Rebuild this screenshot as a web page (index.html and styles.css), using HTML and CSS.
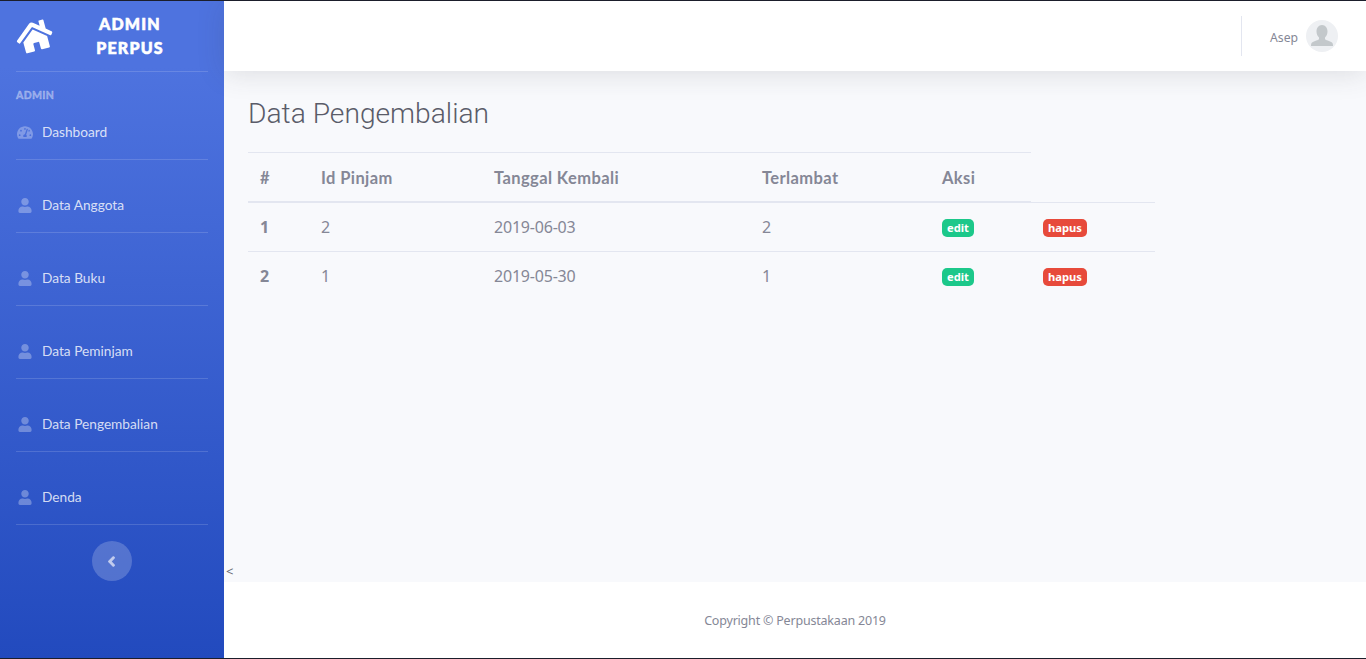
FILE: index.html
```html
<!DOCTYPE html>
<html lang="en">
<head>
    <meta charset="UTF-8">
    <meta name="viewport" content="width=device-width, initial-scale=1.0">
    <title>Data Pengembalian</title>
    <link rel="stylesheet" href="styles.css">
</head>
<body>
    <svg class="icon-defs" width="0" height="0">
        <symbol id="icon-user" viewBox="0 0 448 512">
            <path d="M224 256c70.7 0 128-57.3 128-128S294.7 0 224 0 96 57.3 96 128s57.3 128 128 128zm89.6 32h-16.7c-22.2 10.2-46.9 16-72.9 16s-50.6-5.8-72.9-16h-16.7C60.2 288 0 348.2 0 422.4V464c0 26.5 21.5 48 48 48h352c26.5 0 48-21.5 48-48v-41.6c0-74.2-60.2-134.4-134.4-134.4z"/>
        </symbol>
    </svg>

    <aside class="sidebar">
        <div class="brand">
            <svg class="brand-icon" viewBox="0 0 576 512">
                <path d="M280.37 148.26L96 300.11V464a16 16 0 0 0 16 16l112.06-.29a16 16 0 0 0 15.92-16V368a16 16 0 0 1 16-16h64a16 16 0 0 1 16 16v95.64a16 16 0 0 0 16 16.05L464 480a16 16 0 0 0 16-16V300L295.67 148.26a12.19 12.19 0 0 0-15.3 0zM571.6 251.47L488 182.56V44.05a12 12 0 0 0-12-12h-56a12 12 0 0 0-12 12v72.61L318.47 43a48 48 0 0 0-61 0L4.34 251.47a12 12 0 0 0-1.6 16.9l25.5 31A12 12 0 0 0 45.15 301l235.22-193.74a12.19 12.19 0 0 1 15.3 0L530.9 301a12 12 0 0 0 16.9-1.6l25.5-31a12 12 0 0 0-1.7-16.93z"/>
            </svg>
            <div class="brand-text">ADMIN PERPUS</div>
        </div>
        <div class="nav-heading">ADMIN</div>
        <a class="nav-item nav-first" href="#">
            <svg class="nav-icon nav-icon-wide" viewBox="0 0 576 512">
                <path d="M288 32C128.94 32 0 160.94 0 320c0 52.8 14.25 102.26 39.06 144.8 5.61 9.62 16.3 15.2 27.44 15.2h443c11.14 0 21.83-5.58 27.44-15.2C561.75 422.26 576 372.8 576 320c0-159.06-128.94-288-288-288zm0 64c14.71 0 26.58 10.13 30.32 23.65-1.11 2.26-2.64 4.23-3.45 6.67l-9.22 27.67c-5.13 3.49-10.97 6.01-17.64 6.01-17.67 0-32-14.33-32-32S270.33 96 288 96zM96 384c-17.67 0-32-14.33-32-32s14.33-32 32-32 32 14.33 32 32-14.33 32-32 32zm48-160c-17.67 0-32-14.33-32-32s14.33-32 32-32 32 14.33 32 32-14.33 32-32 32zm246.77-72.41l-61.33 184C343.13 347.33 352 364.54 352 384c0 11.72-3.38 22.55-8.88 32H232.88c-5.5-9.45-8.88-20.28-8.88-32 0-33.94 26.5-61.43 59.9-63.59l61.34-184.01c4.17-12.56 17.73-19.45 30.36-15.17 12.57 4.19 19.35 17.77 15.17 30.36zm14.66 57.2l15.52-46.55c3.47-1.29 7.13-2.23 11.05-2.23 17.67 0 32 14.33 32 32s-14.33 32-32 32c-11.38-.01-20.89-6.28-26.57-15.22zM480 384c-17.67 0-32-14.33-32-32s14.33-32 32-32 32 14.33 32 32-14.33 32-32 32z"/>
            </svg>
            <span>Dashboard</span>
        </a>
        <a class="nav-item" href="#"><svg class="nav-icon"><use href="#icon-user"/></svg><span>Data Anggota</span></a>
        <a class="nav-item" href="#"><svg class="nav-icon"><use href="#icon-user"/></svg><span>Data Buku</span></a>
        <a class="nav-item" href="#"><svg class="nav-icon"><use href="#icon-user"/></svg><span>Data Peminjam</span></a>
        <a class="nav-item" href="#"><svg class="nav-icon"><use href="#icon-user"/></svg><span>Data Pengembalian</span></a>
        <a class="nav-item" href="#"><svg class="nav-icon"><use href="#icon-user"/></svg><span>Denda</span></a>
        <button class="sidebar-toggle" type="button">
            <svg viewBox="0 0 320 512"><path d="M34.52 239.03L228.87 44.69c9.37-9.37 24.57-9.37 33.94 0l22.67 22.67c9.36 9.36 9.37 24.52.04 33.9L131.49 256l154.02 154.75c9.34 9.38 9.32 24.54-.04 33.9l-22.67 22.67c-9.37 9.37-24.57 9.37-33.94 0L34.52 272.97c-9.37-9.37-9.37-24.57 0-33.94z"/></svg>
        </button>
    </aside>

    <div class="main">
        <header class="topbar">
            <div class="topbar-divider"></div>
            <span class="user-name">Asep</span>
            <div class="avatar">
                <svg viewBox="0 0 24 24"><path d="M12 1c-3.500 0-5.500 3-5.500 6.500 0 2.500 1 4.500 2.500 6v1.500c0 1-5 2-7 3.500-1 .8-1 2.500-1 3.500h22c0-1 0-2.700-1-3.500-2-1.500-7-2.500-7-3.500v-1.500c1.500-1.500 2.500-3.500 2.500-6C17.500 4 15.500 1 12 1z"/></svg>
            </div>
        </header>

        <main class="content">
            <h1 class="page-title">Data Pengembalian</h1>
            <table class="data-table">
                <colgroup>
                    <col class="col-no">
                    <col class="col-id">
                    <col class="col-date">
                    <col class="col-late">
                    <col class="col-edit">
                    <col class="col-del">
                </colgroup>
                <thead>
                    <tr>
                        <th>#</th>
                        <th>Id Pinjam</th>
                        <th>Tanggal Kembali</th>
                        <th>Terlambat</th>
                        <th>Aksi</th>
                    </tr>
                </thead>
                <tbody>
                    <tr>
                        <th>1</th>
                        <td>2</td>
                        <td>2019-06-03</td>
                        <td>2</td>
                        <td><a class="badge badge-edit" href="#">edit</a></td>
                        <td><a class="badge badge-delete" href="#">hapus</a></td>
                    </tr>
                    <tr>
                        <th>2</th>
                        <td>1</td>
                        <td>2019-05-30</td>
                        <td>1</td>
                        <td><a class="badge badge-edit" href="#">edit</a></td>
                        <td><a class="badge badge-delete" href="#">hapus</a></td>
                    </tr>
                </tbody>
            </table>
        </main>
        <div class="stray">&lt;</div>

        <footer class="footer">Copyright © Perpustakaan 2019</footer>
    </div>
</body>
</html>
```

FILE: styles.css
```css
* {
    box-sizing: border-box;
}

html, body {
    height: 100%;
}

body {
    display: flex;
    position: relative;
    margin: 0;
    overflow: hidden;
    border-top: 1px solid #1b1e2b;
    border-bottom: 1px solid #1b1e2b;
    background-color: #f8f9fc;
    color: #858796;
    font-family: "Noto Sans", "Open Sans", sans-serif;
}

/* lighter patch on the bottom edge of the window */
body::after {
    content: "";
    position: absolute;
    left: 440px;
    bottom: -1px;
    width: 50px;
    height: 1px;
    background-color: #55575f;
}

.icon-defs {
    display: none;
}

/* sidebar */
.sidebar {
    flex: 0 0 224px;
    display: flex;
    flex-direction: column;
    padding: 0 16px;
    background-image: linear-gradient(180deg, #4e73df 10%, #224abe 100%);
    font-family: Lato, sans-serif;
}

.brand {
    display: flex;
    align-items: center;
    height: 71px;
    border-bottom: 1px solid rgba(255, 255, 255, 0.15);
}

.brand-icon {
    width: 37px;
    height: 33px;
    fill: white;
    transform: rotate(-15deg);
}

.brand-text {
    width: 106px;
    margin-left: 24px;
    color: white;
    font-size: 16px;
    font-weight: 900;
    line-height: 24px;
    letter-spacing: 1.2px;
    text-align: center;
    -webkit-text-stroke: 0.6px white;
}

.nav-heading {
    margin-top: 16px;
    color: rgba(255, 255, 255, 0.4);
    font-size: 10.5px;
    font-weight: 900;
    line-height: 15px;
    letter-spacing: 0.3px;
    -webkit-text-stroke: 0.3px rgba(255, 255, 255, 0.4);
}

.nav-item {
    display: flex;
    align-items: center;
    padding: 36px 0 18px;
    border-bottom: 1px solid rgba(255, 255, 255, 0.15);
    color: rgba(255, 255, 255, 0.8);
    font-size: 13.7px;
    line-height: 18px;
    text-decoration: none;
}

.nav-first {
    padding-top: 20px;
}

.nav-icon {
    width: 14px;
    height: 15px;
    margin: 0 10px 0 2px;
    fill: rgba(255, 255, 255, 0.3);
}

.nav-icon-wide {
    width: 16px;
    margin: 0 9px 0 1px;
}

.sidebar-toggle {
    display: flex;
    align-items: center;
    justify-content: center;
    align-self: center;
    width: 40px;
    height: 40px;
    margin-top: 16px;
    padding: 0;
    border: none;
    border-radius: 50%;
    background-color: rgba(255, 255, 255, 0.2);
}

.sidebar-toggle svg {
    width: 9px;
    height: 11px;
    margin-right: 1px;
    fill: #c3cdee;
    stroke: #c3cdee;
    stroke-width: 50px;
}

/* top bar */
.main {
    flex: 1;
    display: flex;
    flex-direction: column;
    min-width: 0;
}

.topbar {
    display: flex;
    align-items: center;
    justify-content: flex-end;
    flex: 0 0 70px;
    padding-right: 28px;
    background-color: white;
    box-shadow: 0 2.4px 28px rgba(58, 59, 69, 0.15);
    position: relative;
}

.topbar-divider {
    width: 1px;
    height: 40px;
    margin-right: 28px;
    background-color: #e3e6f0;
}

.user-name {
    margin-right: 8px;
    padding-top: 2px;
    font-size: 12.2px;
}

.avatar {
    display: flex;
    align-items: flex-end;
    justify-content: center;
    width: 32px;
    height: 32px;
    padding-bottom: 4px;
    border-radius: 50%;
    background-color: #eef0f3;
}

.avatar svg {
    width: 24px;
    height: 24px;
    fill: #c3c8cb;
}

/* table */
.content {
    flex: 1;
    padding: 24px 24px 0;
}

.page-title {
    margin: 0 0 20px;
    color: #5a5c69;
    font-family: Roboto, sans-serif;
    font-size: 28.2px;
    font-weight: 300;
    line-height: 37px;
}

.data-table {
    width: 907px;
    table-layout: fixed;
    border-collapse: collapse;
    font-size: 16px;
    line-height: 24px;
    letter-spacing: -0.2px;
}

.col-no { width: 61px; }
.col-id { width: 173px; }
.col-date { width: 268px; }
.col-late { width: 180px; }
.col-edit { width: 101px; }
.col-del { width: 124px; }

.data-table th,
.data-table td {
    padding: 12px;
    border-top: 1px solid #e3e6f0;
    text-align: left;
}

.data-table thead th {
    padding: 13px 12px 11px;
    border-bottom: 2px solid #e3e6f0;
    font-family: Lato, sans-serif;
    font-size: 16.5px;
    font-weight: 700;
    letter-spacing: 0.4px;
}

.badge {
    display: inline-block;
    margin-top: 4px;
    padding: 0 5px;
    border-radius: 5px;
    color: white;
    font-size: 11.2px;
    font-weight: 700;
    line-height: 18px;
    letter-spacing: 0;
    vertical-align: top;
    text-decoration: none;
}

.badge-edit {
    background-color: #1cc88a;
}

.badge-delete {
    background-color: #e74a3b;
}

.stray {
    height: 19px;
    padding-left: 2px;
    color: #666872;
    font-size: 13px;
    line-height: 17px;
}

/* footer */
.footer {
    flex: 0 0 76px;
    display: flex;
    align-items: center;
    justify-content: center;
    background-color: white;
    font-size: 12.5px;
    letter-spacing: -0.2px;
}
```
